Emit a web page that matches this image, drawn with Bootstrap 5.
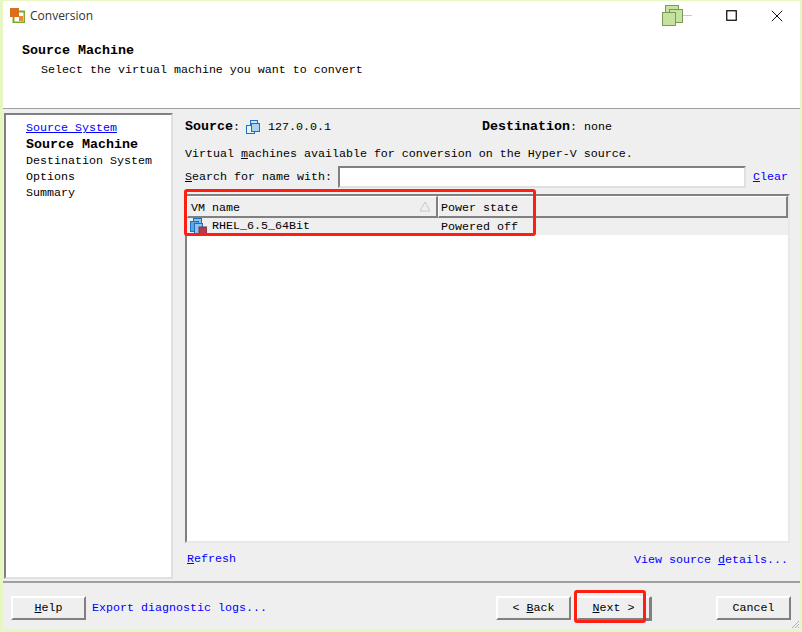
<!DOCTYPE html>
<html lang="en">
<head>
<meta charset="utf-8">
<title>Conversion</title>
<link rel="stylesheet" href="https://cdn.jsdelivr.net/npm/bootstrap@5.3.0/dist/css/bootstrap.min.css">
<style>
html,body{margin:0;height:632px;overflow:hidden;background:#fff}
.win{width:802px;height:632px;border:solid #e6f7c4;border-width:1px 2px 3px 3px;background:#fff;font-family:"Liberation Mono",monospace;font-size:11.67px;line-height:16px;color:#000;position:relative;display:flex;flex-direction:column}
.hdr{height:108px;flex:none;border-bottom:1px solid #a0a0a0}
.tbar{height:29px;padding:7px 0 0 7px;font-family:"Open Sans",sans-serif;font-size:12px;color:#333;line-height:15px}
.ttl{margin-left:5px}
.winctl{margin-left:auto;margin-top:-3px;padding-right:17px;gap:24px}
.bold8{font-weight:700;font-size:13.33px;letter-spacing:0}
.hd1{padding:13px 0 0 19px;height:29px}
.hd2{padding:3px 0 0 38px}
.mxi,.cli{margin-left:10px}
.mid{flex:1;min-height:0;background:#efefef}
.side{width:169px;flex:none;margin:4px 0 2px 1px;background:#fff;border:2px solid;border-color:#808080 #e0e0e0 #e0e0e0 #808080;padding:5px 0 0 20px}
.side div{height:16px}
.side div:first-child{height:17px}
.lk{color:#00f;text-decoration:none}
.lku{color:#00f;text-decoration:underline}
.lk u{text-decoration:underline}
.pane{flex:1;min-width:0;padding:10px 9px 0 12px;display:flex;flex-direction:column}
.srow{height:16px}
.dest{margin-left:151px}
.dst-gap{margin:0 8px 0 6px}
.vrow{margin-top:11px;height:16px}
.frow{margin-top:4px;height:22px;align-items:center}
.sbox{width:408px;height:22px;margin-left:6px;background:#fff;border:2px solid;border-color:#808080 #e0e0e0 #e0e0e0 #808080}
.clr{margin-left:7px}
.listw{position:relative;margin-top:6px;height:349px;background:#fff;border:2px solid;border-color:#808080 #e8e8e8 #e8e8e8 #808080;width:605px}
.vt{width:100%;table-layout:fixed;border-collapse:separate;border-spacing:0}
.vt th{font-weight:400;height:22px;padding:2px 0 0 3px;background:#efefef;border:solid;border-width:1px 2px 2px 1px;border-color:#fff #808080 #808080 #fff;position:relative;line-height:16px}
.vt th.c2{padding-left:2px}
.vt td{height:17px;padding:0 0 0 3px;background:#efefef;line-height:16px}
.c1{width:251px}
.sorta{position:absolute;right:5px;top:4px}
.vmico{vertical-align:top;margin:0 5px 0 0}
.blink{height:32px;padding:0 3px 0 2px;align-items:center}
.dtl{margin-top:2px}
.foot{height:48px;flex:none;background:#efefef;border-top:2px solid #a0a0a0;padding:13px 9px 0 8px;align-items:flex-start}
.wbtn{width:75px;height:24px;padding:0;border-radius:0;background:#efefef;color:#000;font:inherit;line-height:20px;border:2px solid;border-color:#fff #808080 #808080 #fff}
.wbtn u{text-decoration:underline}
.exp{margin:2px 0 0 6px;line-height:20px}
.back{margin-left:auto}
.nxt{box-shadow:1px 1px 0 #808080}
.cnc{margin-left:65px}
.mark1{position:absolute;left:-3px;top:-7px;width:352px;height:47px;border:3px solid #ff1f12;border-radius:3px;pointer-events:none}
.mark2{position:absolute;left:-2px;top:-6px;width:72px;height:33px;border:3px solid #ff1f12;border-radius:3px;pointer-events:none}
.nxtw{position:relative;margin-left:5px}
.grip{position:absolute;right:0;bottom:0}
</style>
</head>
<body>
<div class="win">
  <div class="hdr">
    <div class="tbar d-flex align-items-start">
      <svg width="15" height="15" viewBox="0 0 15 15"><rect x="3.5" y="3.5" width="11" height="11" fill="#fff" stroke="#79ab2a" stroke-width="2"/><rect x="0" y="0" width="9" height="9" fill="#d96f1b"/><rect x="9" y="8" width="4" height="5" fill="#e58a3c"/></svg>
      <span class="ttl">Conversion</span>
      <div class="winctl d-flex align-items-center">
        <svg width="30" height="21" viewBox="0 0 30 21"><path d="M21 10.5h9" stroke="#c8c8c8"/><rect x="3.5" y=".5" width="13" height="13" fill="#c5e29f" stroke="#7a9a5c"/><rect x="7.5" y="4.5" width="13" height="13" fill="#c5e29f" stroke="#7a9a5c"/><rect x=".5" y="7.5" width="13" height="13" fill="#c5e29f" stroke="#7a9a5c"/></svg>
        <svg class="mxi" width="11" height="11" viewBox="0 0 11 11"><rect x=".75" y=".75" width="9.5" height="9.5" fill="none" stroke="#000" stroke-width="1.2"/></svg>
        <svg class="cli" width="12" height="12" viewBox="0 0 12 12"><path d="M.8.8l10.4 10.4M11.2.8L.8 11.2" stroke="#111" stroke-width="1"/></svg>
      </div>
    </div>
    <div class="hd1 bold8">Source Machine</div>
    <div class="hd2">Select the virtual machine you want to convert</div>
  </div>
  <div class="mid d-flex">
    <div class="side">
      <div><a class="lku" href="#">Source System</a></div>
      <div class="bold8">Source Machine</div>
      <div>Destination System</div>
      <div>Options</div>
      <div>Summary</div>
    </div>
    <div class="pane">
      <div class="srow d-flex align-items-center">
        <span class="bold8">Source</span><span>:</span>
        <svg class="dst-gap" width="14" height="14" viewBox="0 0 14 14"><rect x="4.5" y=".5" width="7" height="7" fill="#cfe6f7" stroke="#1d6fc4"/><rect x=".5" y="5.5" width="8" height="8" fill="#e8f3fb" stroke="#1d6fc4"/><rect x="5.5" y="3.5" width="8" height="8" fill="#a9d3f0" stroke="#1d6fc4"/></svg>
        <span>127.0.0.1</span>
        <span class="dest bold8">Destination</span><span>: none</span>
      </div>
      <div class="vrow">Virtual <u>m</u>achines available for conversion on the Hyper-V source.</div>
      <div class="frow d-flex">
        <span><u>S</u>earch for name with:</span>
        <div class="sbox"></div>
        <a class="lk clr" href="#"><u>C</u>lear</a>
      </div>
      <div class="listw">
        <table class="vt">
          <thead><tr><th class="c1">VM name<svg class="sorta" width="12" height="11" viewBox="0 0 12 11"><path d="M6 1L1 10h10z" fill="none" stroke="#c8c8c8"/></svg></th><th class="c2">Power state</th></tr></thead>
          <tbody><tr><td><svg class="vmico" width="17" height="17" viewBox="0 0 17 17"><rect x="3.5" y=".5" width="8" height="9" fill="#8fc4ea" stroke="#1d6fc4"/><rect x=".5" y="3.5" width="8" height="10" fill="#5da6dd" stroke="#1d6fc4"/><rect x="4.5" y="5.5" width="8" height="10" fill="#8fc4ea" stroke="#1d6fc4"/><rect x="9" y="9" width="8" height="8" fill="#b23a52" stroke="#6e3a44"/></svg>RHEL_6.5_64Bit</td><td>Powered off</td></tr></tbody>
        </table>
        <div class="mark1"></div>
      </div>
      <div class="blink d-flex justify-content-between">
        <a class="lk" href="#"><u>R</u>efresh</a>
        <a class="lk dtl" href="#">View source <u>d</u>etails...</a>
      </div>
    </div>
  </div>
  <div class="foot d-flex">
    <button class="btn wbtn" type="button"><u>H</u>elp</button>
    <a class="lk exp" href="#">Export diagnostic logs...</a>
    <button class="btn wbtn back" type="button">&lt; <u>B</u>ack</button>
    <div class="nxtw">
      <button class="btn wbtn nxt" type="button"><u>N</u>ext &gt;</button>
      <div class="mark2"></div>
    </div>
    <button class="btn wbtn cnc" type="button">Cancel</button>
  </div>
  <svg class="grip" width="10" height="10" viewBox="0 0 10 10"><path d="M9 2L2 9M9 5L5 9M9 8L8 9" stroke="#b0b0b0"/></svg>
</div>
</body>
</html>
